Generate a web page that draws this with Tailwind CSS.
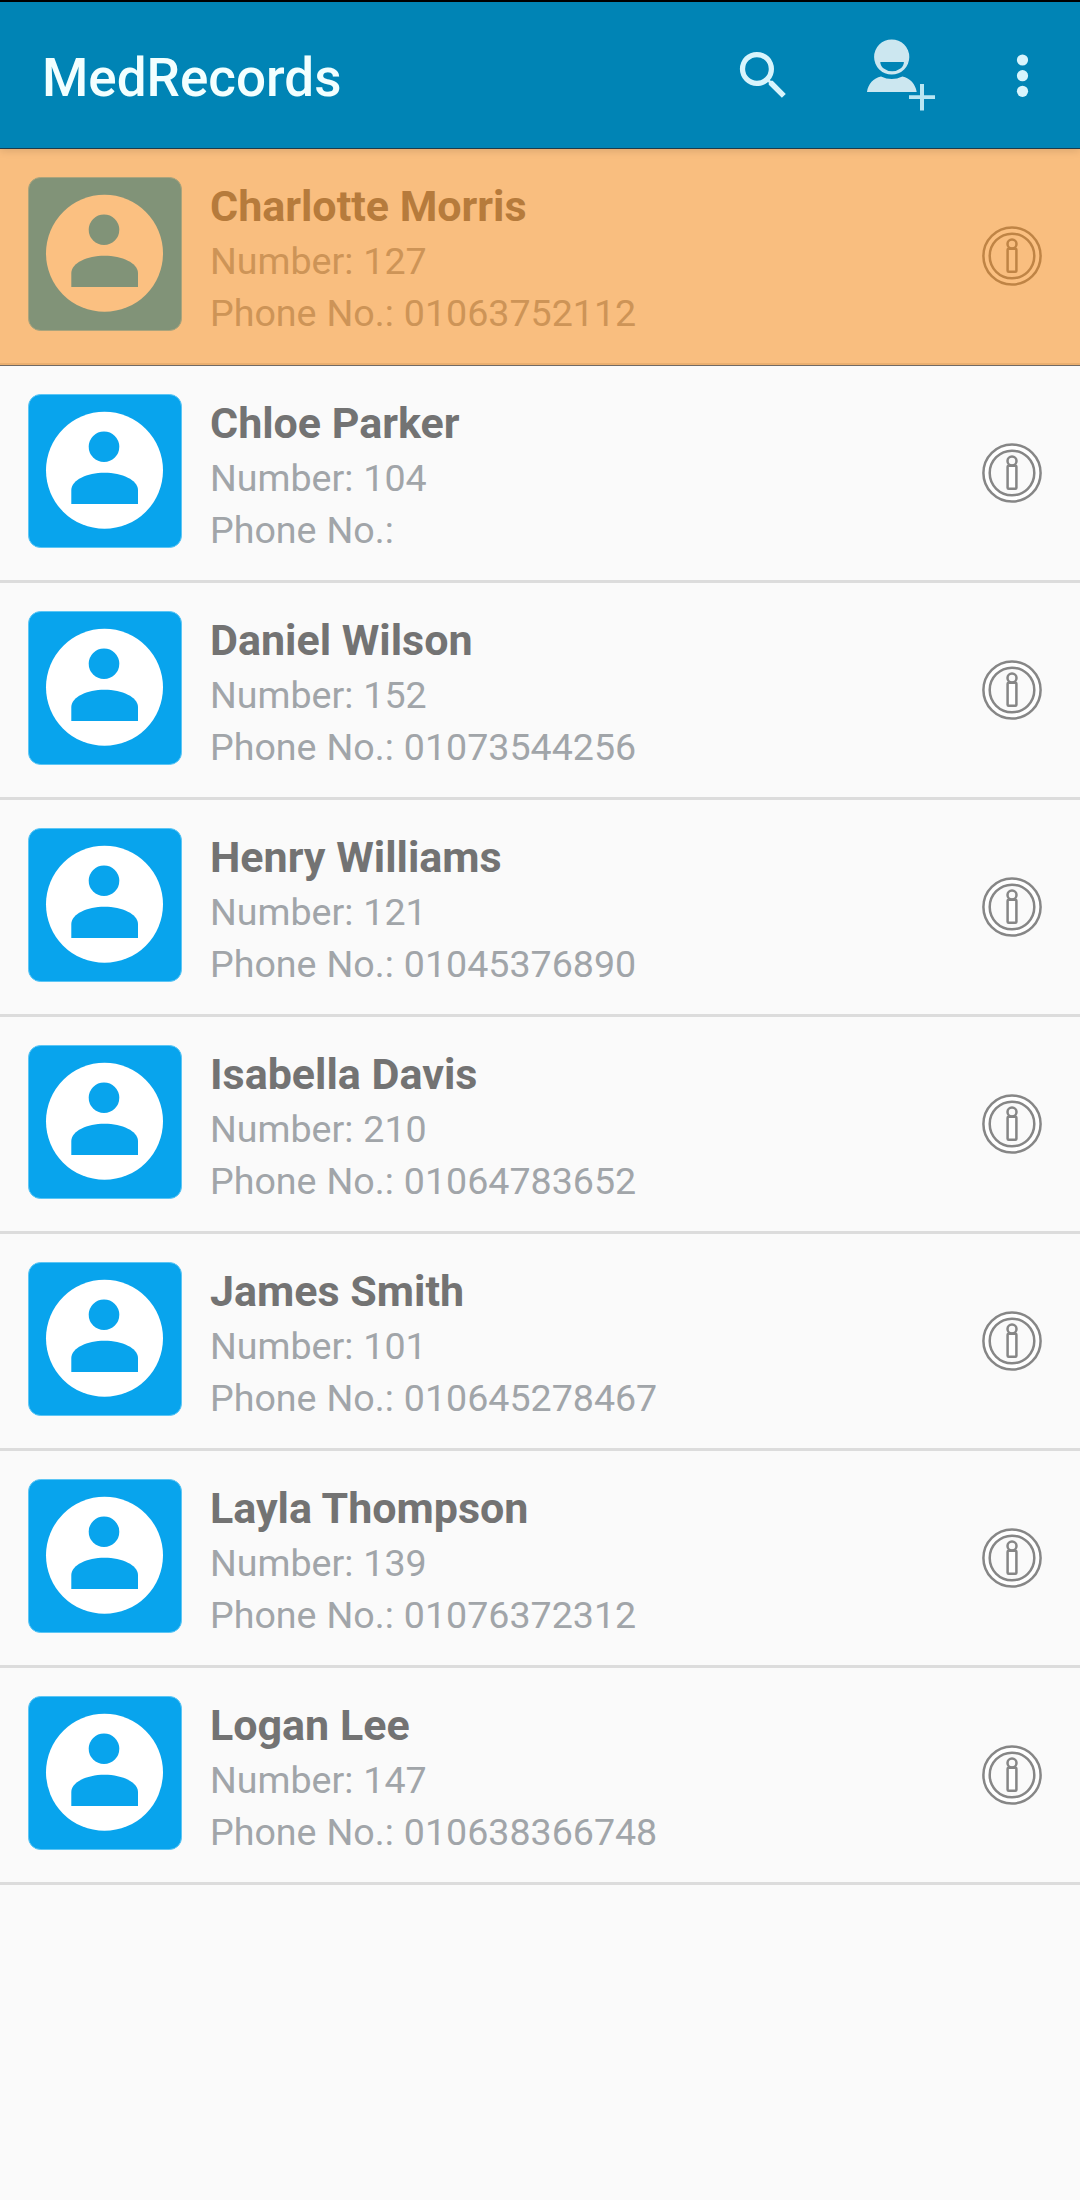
<!DOCTYPE html>
<html lang="en">
<head>
    <meta charset="UTF-8">
    <meta name="viewport" content="width=device-width, initial-scale=1.0">
    <title>MedRecords</title>
    <script src="https://cdn.jsdelivr.net/npm/@tailwindcss/browser@4"></script>
</head>
<body class="min-h-screen bg-[#fafafa] font-['Roboto',sans-serif]">
    <!-- Shared icons -->
    <svg class="hidden">
        <symbol id="avatar" viewBox="0 0 154 154">
            <rect x="0.5" y="0.5" width="153" height="153" rx="12" fill="#08a4ed" stroke="#5cc6f5"/>
            <circle cx="76.5" cy="76.3" r="58.5" fill="#fff"/>
            <circle cx="76" cy="52.7" r="15.3" fill="#08a4ed"/>
            <path d="M43.3 110V96C43.3 86 59 78.7 76.5 78.7S110 86 110 96V110Z" fill="#08a4ed"/>
        </symbol>
        <symbol id="info" viewBox="0 0 60 60">
            <circle cx="30" cy="30" r="25.5" fill="none" stroke="#fff" stroke-width="5"/>
            <g fill="none" stroke="#868686" stroke-width="2.5">
                <circle cx="30" cy="30" r="28.6"/>
                <circle cx="30" cy="30" r="22.3"/>
                <circle cx="30" cy="18" r="4.5"/>
                <rect x="25.6" y="22.8" width="8.8" height="23" rx="1" fill="#fff"/>
            </g>
        </symbol>
    </svg>

    <!-- Toolbar -->
    <header class="relative z-10 flex h-[149px] items-center border-t-2 border-b border-t-black border-b-[#1d3b4a] bg-[#0084b5] pl-[42px] pr-[26px] shadow-[0_2px_8px_rgba(0,0,0,0.12)]">
        <h1 class="mt-1.5 flex-1 text-[53px] leading-none font-medium text-[#f2ffff]">MedRecords</h1>
        <svg class="mr-[60px] size-[63px] fill-[#d8f4fc]" viewBox="0 0 24 24">
            <path d="M15.5 14h-.79l-.28-.27A6.47 6.47 0 0 0 16 9.5 6.5 6.5 0 1 0 9.5 16c1.61 0 3.09-.59 4.23-1.57l.27.28v.79l5 4.99L20.49 19l-4.99-5zm-6 0a4.5 4.5 0 1 1 0-9 4.5 4.5 0 0 1 0 9z"/>
        </svg>
        <svg class="mr-[55px] h-[80px] w-[81px] fill-[#cce7f0]" viewBox="0 0 81 80">
            <path fill-rule="evenodd" d="M36.7 4.4a17.6 17.6 0 1 1 0 35.2 17.6 17.6 0 1 1 0-35.2zM25.3 27a11.4 9 0 0 0 23.6 0z"/>
            <path d="M12 57C13 49 18.5 43 26 41.5Q36.7 46.5 47.4 41.5C55 43 60.5 49 61.7 57Z"/>
            <path d="M54 60.2h26v3.8H54zM65 49h4v26.4h-4z" fill="#b9e6f3"/>
        </svg>
        <svg class="h-[63px] w-[63px] fill-[#d8f4fc]" viewBox="0 0 63 63">
            <circle cx="31.5" cy="16" r="5.6"/>
            <circle cx="31.5" cy="31.7" r="5.6"/>
            <circle cx="31.5" cy="47.3" r="5.6"/>
        </svg>
    </header>

    <!-- Patient list -->
    <ul id="patients"></ul>

    <script>
        const patients = [
            { name: 'Charlotte Morris', number: '127', phone: '01063752112', selected: true },
            { name: 'Chloe Parker', number: '104', phone: '' },
            { name: 'Daniel Wilson', number: '152', phone: '01073544256' },
            { name: 'Henry Williams', number: '121', phone: '01045376890' },
            { name: 'Isabella Davis', number: '210', phone: '01064783652' },
            { name: 'James Smith', number: '101', phone: '010645278467' },
            { name: 'Layla Thompson', number: '139', phone: '01076372312' },
            { name: 'Logan Lee', number: '147', phone: '010638366748' },
        ];

        document.getElementById('patients').innerHTML = patients.map(patient => `
            <li class="relative flex h-[217px] border-b-3 border-[#dcdcdc] pt-7 pr-[38px] pl-7">
                <svg class="size-[154px]"><use href="#avatar"/></svg>
                <div class="ml-7 flex-1 text-[37.6px] leading-[52px] text-[#a1a5a9]">
                    <h2 class="text-[43px] leading-[58px] font-bold text-[#737373]">${patient.name}</h2>
                    <p class="[word-spacing:0.7px]">Number: ${patient.number}</p>
                    <p class="[word-spacing:0.7px]">Phone No.: ${patient.phone}</p>
                </div>
                <svg class="mt-[49px] size-[60px]"><use href="#info"/></svg>
                ${patient.selected ? '<div class="absolute inset-x-0 top-0 -bottom-[3px] border-b border-[#716a64] bg-[#f88408]/51"></div>' : ''}
            </li>
        `).join('');
    </script>
</body>
</html>
